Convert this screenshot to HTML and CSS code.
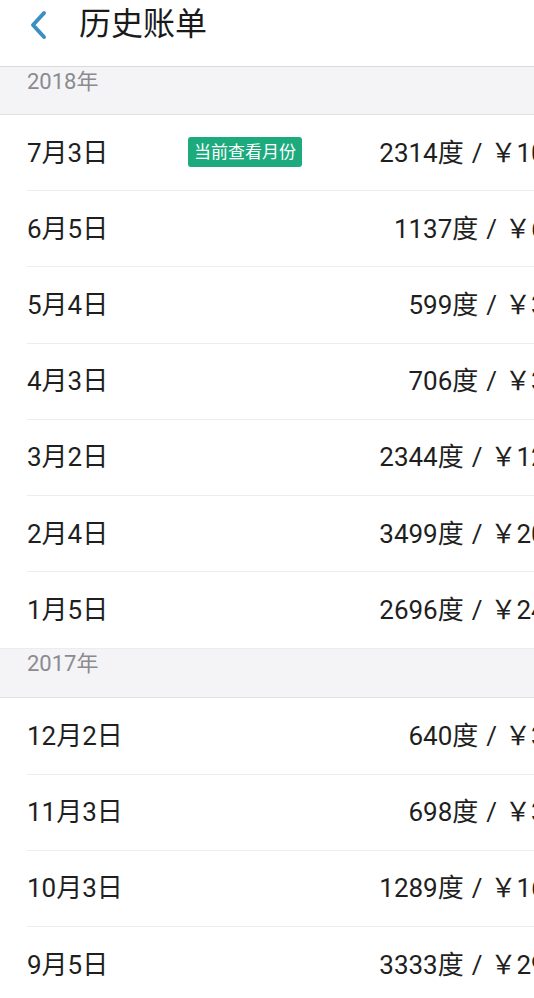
FILE: index.html
```html
<!DOCTYPE html>
<html lang="zh-CN">
<head>
<meta charset="utf-8">
<title>历史账单</title>
<link rel="stylesheet" href="styles.css">
</head>
<body>
<div class="page">
  <header class="header">
    <svg class="back" width="22" height="30" viewBox="0 0 22 30"><path d="M16 3 L5 15 L16 27" fill="none" stroke="#3b8fc4" stroke-width="4" stroke-linecap="round" stroke-linejoin="round"/></svg>
    <h1 class="title">历史账单</h1>
  </header>
  <div class="list">
    <div class="year">2018年</div>
    <div class="row"><div class="row-inner"><span class="date">7月3日</span><span class="badge">当前查看月份</span><span class="value">2314度<span class="sep">/</span>￥1096.53</span></div></div>
    <div class="row"><div class="row-inner"><span class="date">6月5日</span><span class="value">1137度<span class="sep">/</span>￥602.61</span></div></div>
    <div class="row"><div class="row-inner"><span class="date">5月4日</span><span class="value">599度<span class="sep">/</span>￥317.47</span></div></div>
    <div class="row"><div class="row-inner"><span class="date">4月3日</span><span class="value">706度<span class="sep">/</span>￥374.18</span></div></div>
    <div class="row"><div class="row-inner"><span class="date">3月2日</span><span class="value">2344度<span class="sep">/</span>￥1242.32</span></div></div>
    <div class="row"><div class="row-inner"><span class="date">2月4日</span><span class="value">3499度<span class="sep">/</span>￥2054.47</span></div></div>
    <div class="row last"><div class="row-inner"><span class="date">1月5日</span><span class="value">2696度<span class="sep">/</span>￥2428.88</span></div></div>
    <div class="year second">2017年</div>
    <div class="row"><div class="row-inner"><span class="date">12月2日</span><span class="value">640度<span class="sep">/</span>￥339.20</span></div></div>
    <div class="row"><div class="row-inner"><span class="date">11月3日</span><span class="value">698度<span class="sep">/</span>￥369.94</span></div></div>
    <div class="row"><div class="row-inner"><span class="date">10月3日</span><span class="value">1289度<span class="sep">/</span>￥1683.17</span></div></div>
    <div class="row last"><div class="row-inner"><span class="date">9月5日</span><span class="value">3333度<span class="sep">/</span>￥2966.49</span></div></div>
  </div>
</div>
</body>
</html>
```
FILE: styles.css
```css
html, body {
  margin: 0;
  padding: 0;
  overflow: hidden;
  background: #ffffff;
}
.page {
  width: 534px;
  overflow: hidden;
  font-family: Roboto, "Noto Sans CJK SC", sans-serif;
  color: #1f1f1f;
}
.header {
  height: 67px;
  display: flex;
  align-items: flex-start;
  padding-top: 9px;
  box-sizing: border-box;
  border-bottom: 1px solid #d9d9dc;
}
.back {
  margin-left: 28px;
  margin-top: 1px;
}
.title {
  margin: -1px 0 0 29px;
  font-size: 32px;
  font-weight: 400;
  line-height: 32px;
  color: #1a1a1a;
}
.list {
  overflow: hidden;
}
.year {
  height: 48px;
  box-sizing: border-box;
  padding: 0 27px;
  padding-top: 1px;
  line-height: 28px;
  font-size: 22px;
  color: #8b8b8f;
  background: #f4f4f7;
  border-bottom: 1px solid #e1e1e4;
}
.year.second {
  height: 50px;
  border-top: 1px solid #ececef;
}
.row {
  padding-left: 27px;
}
.row-inner {
  display: flex;
  align-items: center;
  height: 76.2px;
  box-sizing: border-box;
  padding-bottom: 5px;
  border-bottom: 1px solid #ededed;
  margin-right: -77px;
}
.row.last .row-inner {
  border-bottom: none;
}
.date {
  width: 161px;
  flex-shrink: 0;
  font-size: 26px;
  color: #1f1f1f;
}
.badge {
  background: #1dab7e;
  color: #ffffff;
  font-size: 17px;
  line-height: 30px;
  height: 30px;
  padding: 0 6px;
  border-radius: 3px;
  margin-top: 3px;
}
.value {
  margin-left: auto;
  font-size: 26px;
  color: #1f1f1f;
  white-space: nowrap;
}
.sep {
  margin: 0 8px 0 8px;
}
```
